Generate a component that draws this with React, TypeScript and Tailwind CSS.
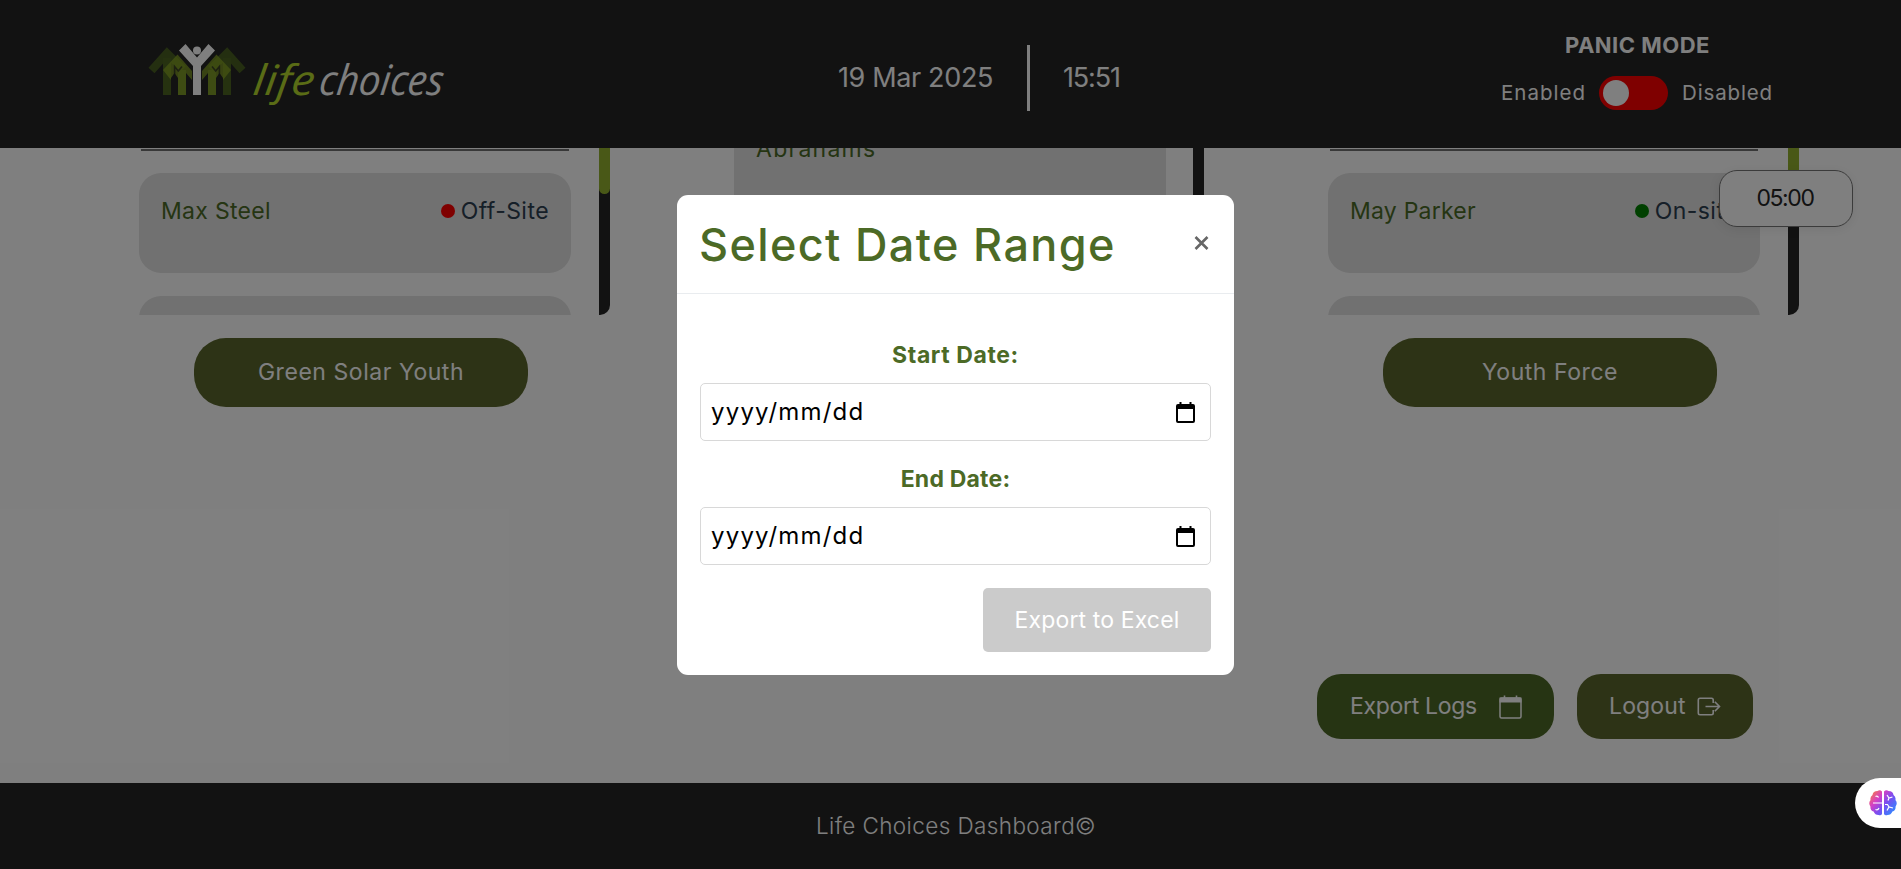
import type { ReactNode } from "react";

function Logo() {
  const house = (
    <>
      <path d="M151.5 70.5 L167 53 L183 69" stroke="#485e20" strokeWidth="8" />
      <path d="M167 58 V95" stroke="#4c6420" strokeWidth="8" />
      <path d="M163 70 L177.5 54.5 L192 71 V80 L186 73 V95 H178 V78 L174.5 73 L171 78 V80 Z" fill="#8aa824" fillOpacity="0.75" />
      <path d="M182 70 V95" stroke="#7c9826" strokeWidth="8" />
      <path d="M174.6 76 V66.5 L178.3 71 L182 66.5" stroke="#242424" strokeOpacity="0.7" strokeWidth="1.6" />
    </>
  );
  return (
    <svg className="mt-[7px] ml-[145px] h-[75px] w-[310px] shrink-0" viewBox="145 40 310 75" fill="none">
      {house}
      <g transform="translate(394 0) scale(-1 1)">{house}</g>
      <path d="M179 50.5 L185.5 44 L197 57.5 L208.5 44 L215 50.5 L201 66 V95 H193 V66 Z" fill="#fff" />
      <circle cx="197" cy="50.5" r="4" fill="#fff" />
      <g fontFamily="Open Sans, sans-serif" fontStyle="italic" fontSize="42">
        <text x="0" y="0" transform="translate(252 94.5) skewX(-7)" textLength="61" lengthAdjust="spacingAndGlyphs" fill="#b4d82c">life</text>
        <text x="0" y="0" transform="translate(318 94.5) skewX(-7)" textLength="124" lengthAdjust="spacingAndGlyphs" fill="#fff">choices</text>
      </g>
    </svg>
  );
}

function CalendarThin() {
  return (
    <svg className="h-6 w-6" viewBox="0 0 24 24" fill="none" stroke="currentColor">
      <rect x="1" y="3" width="21" height="20" rx="1.5" strokeWidth="1.5" />
      <path d="M0.5 2.5 H22.5 V7.5 H0.5 Z" fill="currentColor" stroke="none" />
      <path d="M5.5 0.5 V4 M17.5 0.5 V4" strokeWidth="1.6" />
    </svg>
  );
}

function LogoutIcon() {
  return (
    <svg className="h-5 w-6" viewBox="0 0 24 20" fill="none" stroke="currentColor" strokeWidth="1.6">
      <path d="M16.2 6 V3 Q16.2 1.3 14.5 1.3 H3 Q1.3 1.3 1.3 3 V16 Q1.3 17.7 3 17.7 H14.5 Q16.2 17.7 16.2 16 V13" />
      <path d="M8.5 9.5 H22.5 M17.8 4.8 L22.5 9.5 L17.8 14.2" />
    </svg>
  );
}

function PickerIcon() {
  return (
    <svg className="h-[21px] w-[19px]" viewBox="0 0 19 21">
      <path d="M2 2 H3.5 V0 H5.5 V2 H13.5 V0 H15.5 V2 H17 Q19 2 19 4 V19 Q19 21 17 21 H2 Q0 21 0 19 V4 Q0 2 2 2 Z M2 7 V19 H17 V7 Z" fillRule="evenodd" />
    </svg>
  );
}

function BrainIcon() {
  return (
    <svg className="h-[26px] w-[28px]" viewBox="0 0 28 26">
      <defs>
        <linearGradient id="brain" x1="0" y1="0" x2="1" y2="0.8">
          <stop offset="0" stopColor="#ff8a2b" />
          <stop offset="0.35" stopColor="#d63fc4" />
          <stop offset="0.62" stopColor="#7a4df0" />
          <stop offset="1" stopColor="#2f8bff" />
        </linearGradient>
      </defs>
      <path d="M13 1.5 Q11 -0.5 8.5 1 Q4 1.2 3.5 5 Q0.8 7 1.6 10 Q-1 13 1.4 16.5 Q1.2 20.5 4.6 21.5 Q6 25 9.5 25 Q12 26 13 24 Z M15 1.5 Q17 -0.5 19.5 1 Q24 1.2 24.5 5 Q27.2 7 26.4 10 Q29 13 26.6 16.5 Q26.8 20.5 23.4 21.5 Q22 25 18.5 25 Q16 26 15 24 Z" fill="url(#brain)" />
      <path d="M4 13 H13 M6.5 6.5 Q8.5 5.5 9.5 7.5 M6.5 19.5 Q9 20.5 10 18 M18 5 L20 8 L23.5 7 M20 8 L19 10.5 M18 20.5 L20 17 L24 18 M20 17 L18.5 14.5 H16" stroke="#fff" strokeWidth="1.2" fill="none" />
    </svg>
  );
}

function Track({ thumb }: { thumb: boolean }) {
  return (
    <div className="h-full w-[11px] overflow-hidden rounded-br-[10px] bg-[#242424]">
      {thumb && <div className="h-[46px] rounded-b-[6px] bg-[#93b12e]" />}
    </div>
  );
}

function PersonCard({ name, status, dot, nameClass }: { name: string; status: string; dot: string; nameClass: string }) {
  return (
    <div className="mt-[22px] flex h-[100px] w-[432px] shrink-0 items-start justify-between rounded-[22px] bg-[#e2e2e2] px-[22px] pt-[24px] leading-7">
      <span className={`text-[#4b6a26] ${nameClass}`}>{name}</span>
      <span className="flex items-center gap-[6px] tracking-[0.45px] text-[#2c3e50]">
        <i className={`h-[14px] w-[14px] rounded-full ${dot}`} />
        {status}
      </span>
    </div>
  );
}

function Column({ label, children }: { label: string; children: ReactNode }) {
  return (
    <section className="flex w-[471px] flex-col">
      <div className="flex h-[167px] justify-between overflow-hidden">
        <div className="flex w-[432px] flex-col">
          <div className="mx-[2px] mt-px h-[2px] shrink-0 bg-[#707070]" />
          {children}
          <div className="mt-[23px] h-[100px] shrink-0 rounded-[22px] bg-[#e2e2e2]" />
        </div>
        <Track thumb />
      </div>
      <button className="mt-[23px] ml-[55px] h-[69px] w-[334px] rounded-[32px] bg-[#5a662c] tracking-[0.55px] text-white">{label}</button>
    </section>
  );
}

function DateField({ label, spacing }: { label: string; spacing: string }) {
  return (
    <div className="flex flex-col">
      <label className={`text-center text-[23px] leading-8 font-bold text-[#4c6a26] ${spacing}`}>{label}</label>
      <div className="mt-[12px] flex h-[58px] items-center justify-between rounded-[5px] border border-[#d8d8d8] pr-[15px] pl-[10px] text-[24px] text-black">
        <span className="tracking-[1.2px]">yyyy/mm/dd</span>
        <PickerIcon />
      </div>
    </div>
  );
}

export default function App() {
  return (
    <div className="relative h-[869px] w-[1901px] overflow-hidden bg-white font-[Inter,sans-serif] text-[23px]">
      <header className="flex h-[148px] items-center bg-[#242424] text-white">
        <Logo />
        <div className="mt-[8px] ml-[383px] flex items-center text-[27px]">
          <span className="w-[189px] tracking-[-0.36px]">19 Mar 2025</span>
          <div className="h-[66px] w-[3px] bg-white" />
          <span className="ml-[33px] w-[64px] tracking-[-1.15px]">15:51</span>
        </div>
        <div className="-mt-[7px] ml-[374px] flex flex-col items-center gap-[17px]">
          <h2 className="ml-[1px] text-[22px] leading-7 font-bold tracking-[0.5px]">PANIC MODE</h2>
          <div className="flex h-[34px] items-center text-[20.5px]">
            <span className="w-[98px] tracking-[1px]">Enabled</span>
            <div className="flex h-[34px] w-[69px] items-center rounded-full bg-[red] pl-1">
              <div className="h-[26px] w-[26px] rounded-full bg-white" />
            </div>
            <span className="ml-[14px] w-[91px] tracking-[0.85px]">Disabled</span>
          </div>
        </div>
      </header>

      <main className="flex h-[635px] flex-col overflow-hidden pl-[139px]">
        <div className="flex gap-[124px]">
          <Column label="Green Solar Youth">
            <PersonCard name="Max Steel" status="Off-Site" dot="bg-[red]" nameClass="tracking-[0.3px]" />
          </Column>
          <section className="flex h-[167px] w-[470px] justify-between overflow-hidden">
            <div className="w-[432px] bg-[#e2e2e2] px-[22px]">
              <p className="-mt-[13px] leading-7 tracking-[1.26px] text-[#4b6a26]">Abrahams</p>
            </div>
            <Track thumb={false} />
          </section>
          <Column label="Youth Force">
            <PersonCard name="May Parker" status="On-site" dot="bg-[green]" nameClass="tracking-[0.23px]" />
          </Column>
        </div>
        <div className="mt-[267px] mr-[148px] flex justify-end gap-[23px] text-white">
          <button className="flex h-[65px] w-[237px] items-center justify-between rounded-[24px] bg-[#4c6826] pr-[31px] pl-[33px]">
            <span className="tracking-[-0.32px]">Export Logs</span>
            <CalendarThin />
          </button>
          <button className="flex h-[65px] w-[176px] items-center justify-between rounded-[24px] bg-[#5a662c] pr-[32px] pl-[32px]">
            <span className="tracking-[0.14px]">Logout</span>
            <LogoutIcon />
          </button>
        </div>
      </main>

      <footer className="flex h-[86px] items-center justify-center bg-[#242424] pl-[11px] text-[22.5px] font-light tracking-[0.4px] text-white">
        Life Choices Dashboard©
      </footer>

      <div className="absolute top-[170px] left-[1719px] flex h-[57px] w-[134px] items-center justify-center rounded-[18px] border border-[#777] bg-white pr-[2px] tracking-[-1.4px] text-[#242424] shadow-[0_2px_12px_rgba(0,0,0,0.08)]">
        05:00
      </div>

      <div className="absolute inset-0 flex items-start justify-center bg-black/50 pt-[195px] pl-[10px]">
        <div className="flex h-[480px] w-[557px] flex-col rounded-[11px] bg-white">
          <div className="flex h-[99px] items-center justify-between border-b border-[#e9ecef] pr-[25px] pl-[22px]">
            <h1 className="text-[45px] leading-none font-medium tracking-[1.35px] text-[#4c6a26]">Select Date Range</h1>
            <svg className="mb-[3px] h-[14px] w-[15px]" viewBox="0 0 15 14" stroke="#666" strokeWidth="2.6">
              <path d="M1.5 1 L13.5 13 M13.5 1 L1.5 13" />
            </svg>
          </div>
          <div className="flex flex-col px-[23px] pt-[45px]">
            <DateField label="Start Date:" spacing="tracking-[0.6px]" />
            <div className="h-[22px]" />
            <DateField label="End Date:" spacing="tracking-[0.2px]" />
            <button className="mt-[23px] h-[64px] w-[228px] self-end rounded-[5px] bg-[#cbcbcb] tracking-[0.13px] text-white">Export to Excel</button>
          </div>
        </div>
      </div>

      <div className="absolute top-[778px] left-[1855px] flex h-[50px] w-[60px] items-center rounded-l-full bg-white pl-[14px]">
        <BrainIcon />
      </div>
    </div>
  );
}
